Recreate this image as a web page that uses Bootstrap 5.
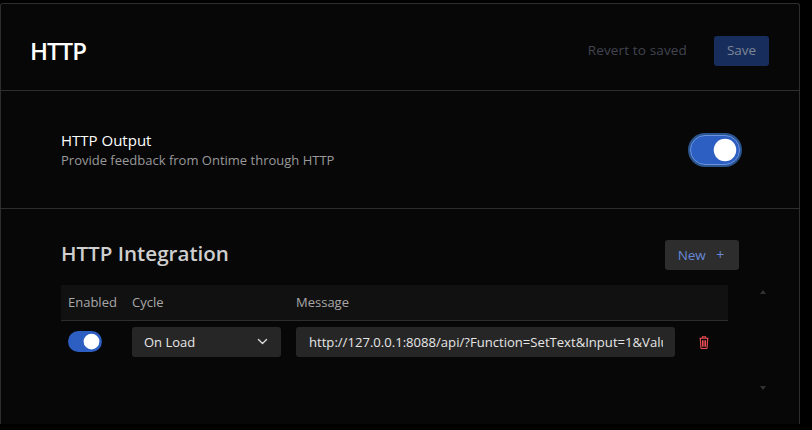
<!DOCTYPE html>
<html lang="en" data-bs-theme="dark">
<head>
<meta charset="utf-8">
<title>HTTP</title>
<link href="https://cdn.jsdelivr.net/npm/bootstrap@5.3.0/dist/css/bootstrap.min.css" rel="stylesheet">
<style>
html,body{height:430px;overflow:hidden;background:#000;}
body{font-family:"Open Sans","Liberation Sans",sans-serif;color:#fff;padding:3px 12px 6px 0;}
.panel-box{height:421px;background:#070708;border:1px solid #2d2d2d;border-bottom:0;border-radius:3px 3px 0 0;}
.head-row{height:87px;padding:7px 30px 0;border-bottom:1px solid #2d2d2d;}
.head-title{font-size:24px;font-weight:600;margin:0 0 0 -1px;line-height:1;color:#fff;letter-spacing:-1px;}
.btn-revert{font-size:13.5px;color:#42444f;background:none;border:0;padding:0;letter-spacing:.15px;}
.btn-save{width:55px;height:30px;padding:0;font-size:13.5px;font-weight:500;color:#7d8797;background:#172d5c;border:0;border-radius:3px;margin-left:3px;}
.out-row{height:118px;padding:0 59px 0 60px;border-bottom:1px solid #2d2d2d;}
.out-title{font-size:15px;font-weight:500;color:#fff;line-height:20px;margin-bottom:1px;}
.out-desc{font-size:13px;color:#999;line-height:18px;margin-bottom:1px;}
.form-switch .big-sw.form-check-input,.form-switch .small-sw.form-check-input{margin:0;float:none;border:0;background-color:#2d5ec2;background-image:url("data:image/svg+xml,%3csvg xmlns='http://www.w3.org/2000/svg' viewBox='-4 -4 8 8'%3e%3ccircle r='3' fill='%23fff'/%3e%3c/svg%3e");background-position:right center;}
.form-switch .big-sw.form-check-input{width:50px;height:30px;border-radius:15px;background-size:30px 30px;background-position:right -1px center;border:1px solid #6a93e0;box-shadow:0 0 0 2px #2a5590;}
.form-switch .small-sw.form-check-input{width:34px;height:21px;border-radius:11px;background-size:21px 21px;}
.form-switch{padding:0;min-height:0;margin:0;display:flex;}
.int-wrap{padding:31px 60px 0 60px;}
.int-title{font-size:20.6px;font-weight:600;color:#cfcfcf;margin:-2px 0 2px;line-height:30px;}
.btn-new{width:74px;height:30px;padding:0 2px 0 0;font-size:13.5px;color:#6688d8;background:#2d2d2d;border:0;border-radius:3px;}
.btn-new span{margin-left:7px;font-size:14px;}
.scroll-area{margin-top:15px;margin-right:-31px;}
.tbl-wrap{width:667px;}
.http-tbl{--bs-table-bg:transparent;--bs-table-color:#fff;--bs-table-border-color:#2d2d2d;margin:0;table-layout:fixed;width:667px;}
.http-tbl th{height:35px;padding:0 0 0 7px;font-size:13px;font-weight:400;color:#a8a8a8;background:#111112;vertical-align:middle;border-bottom:1px solid #2d2d2d;}
.http-tbl td{height:44px;padding:6px 0 8px 7px;vertical-align:middle;border:0;}
.http-tbl th:nth-child(2),.http-tbl td:nth-child(2){padding-left:0;}
.http-tbl th:nth-child(3),.http-tbl td:nth-child(3){padding-left:0;}
.sel-cycle,.url-field{height:30px;padding:0 12px;font-size:13px;line-height:30px;color:#e6e6e6;background-color:#262626;border:0;border-radius:3px;}
.sel-cycle{width:149px;background-image:url("data:image/svg+xml,%3csvg xmlns='http://www.w3.org/2000/svg' viewBox='0 0 16 16'%3e%3cpath fill='none' stroke='%23ddd' stroke-linecap='round' stroke-linejoin='round' stroke-width='1.6' d='M3 5.5l5 5 5-5'/%3e%3c/svg%3e");background-size:13px;background-position:right 12px center;}
.url-field{width:379px;padding-left:13px;font-size:13.1px;}
.url-field:focus,.sel-cycle:focus{background-color:#262626;color:#e6e6e6;box-shadow:none;}
.scroll-rail{width:14px;height:110px;margin-left:28px;padding:5px 0;}
.trash-btn{background:none;border:0;padding:0;margin:1px 0 0 -1px;display:flex;line-height:0;color:#ee4f54;}
</style>
</head>
<body>
<div class="panel-box">
  <div class="head-row d-flex align-items-center justify-content-between">
    <h1 class="head-title">HTTP</h1>
    <div class="d-flex align-items-center gap-4">
      <button class="btn-revert" type="button" disabled>Revert to saved</button>
      <button class="btn-save" type="button" disabled>Save</button>
    </div>
  </div>
  <div class="out-row d-flex align-items-center justify-content-between">
    <div>
      <div class="out-title">HTTP Output</div>
      <div class="out-desc">Provide feedback from Ontime through HTTP</div>
    </div>
    <div class="form-check form-switch"><input class="form-check-input big-sw" type="checkbox" role="switch" checked aria-label="HTTP Output"></div>
  </div>
  <div class="int-wrap">
    <div class="d-flex align-items-center justify-content-between">
      <h2 class="int-title">HTTP Integration</h2>
      <button class="btn-new" type="button">New <span>+</span></button>
    </div>
    <div class="scroll-area d-flex">
      <div class="tbl-wrap">
        <table class="table http-tbl">
          <colgroup><col style="width:71px"><col style="width:164px"><col style="width:397px"><col></colgroup>
          <thead><tr><th>Enabled</th><th>Cycle</th><th>Message</th><th></th></tr></thead>
          <tbody><tr>
            <td><div class="form-check form-switch"><input class="form-check-input small-sw" type="checkbox" role="switch" checked aria-label="Enabled"></div></td>
            <td><select class="form-select sel-cycle" aria-label="Cycle"><option>On Load</option></select></td>
            <td><input class="form-control url-field" type="text" aria-label="Message" value="http://127.0.0.1:8088/api/?Function=SetText&amp;Input=1&amp;Value=Ontime"></td>
            <td><button class="trash-btn" type="button" aria-label="Delete"><svg width="10" height="13" viewBox="0 0 10 13" fill="none" stroke="currentColor" stroke-width="1.1"><path d="M0.5 2.2h9M3.4 2V.7h3.2V2M1.3 2.4l.6 9.4c0 .4.3.7.7.7h4.8c.4 0 .7-.3.7-.7l.6-9.4M3.5 4.2v6.6M5 4.2v6.6M6.5 4.2v6.6"/></svg></button></td>
          </tr></tbody>
        </table>
      </div>
      <div class="scroll-rail d-flex flex-column justify-content-between align-items-center">
        <svg width="6" height="4" viewBox="0 0 6 4"><path d="M3 0l3 4H0z" fill="#333"/></svg>
        <svg width="6" height="4" viewBox="0 0 6 4"><path d="M3 4l3-4H0z" fill="#333"/></svg>
      </div>
    </div>
  </div>
</div>
</body>
</html>
